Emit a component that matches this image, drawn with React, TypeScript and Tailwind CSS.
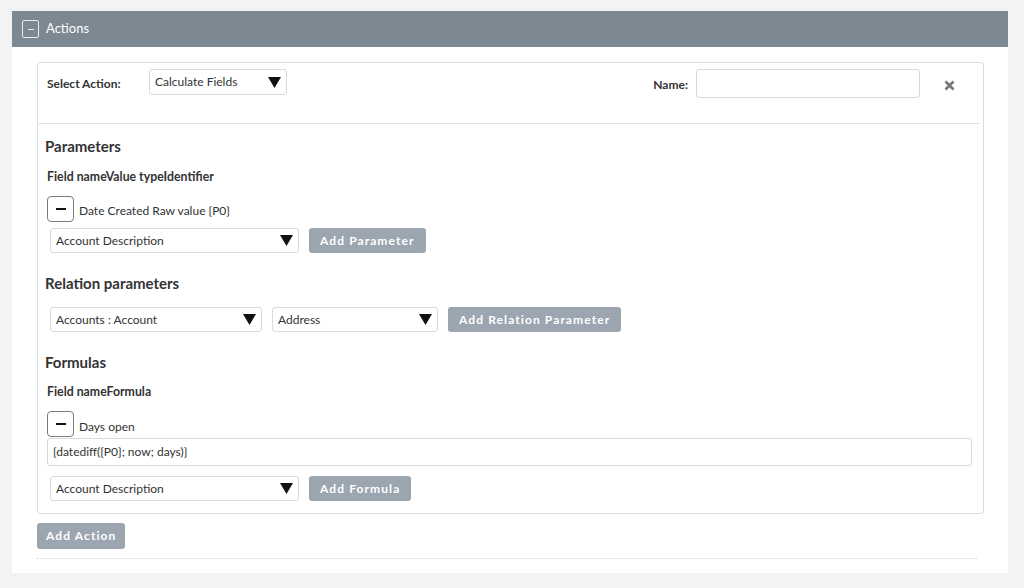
import React from "react";

const font = { fontFamily: "Lato, 'Open Sans', sans-serif" };

function Arrow() {
  return (
    <svg width="13" height="11" viewBox="0 0 13 11" className="shrink-0">
      <path d="M0 0 H13 L6.5 11 Z" fill="#111" />
    </svg>
  );
}

function Select({ value, width }: { value: string; width: string }) {
  return (
    <div
      className={`flex h-[25px] items-center justify-between rounded-[3px] border border-[#dadada] bg-white pl-[5px] pr-[5px] text-[12px] text-[#333] ${width}`}
    >
      <span>{value}</span>
      <Arrow />
    </div>
  );
}

function GrayButton({ label }: { label: string }) {
  return (
    <button className="h-[25px] rounded-[3px] bg-[#9ba6b1] px-[11px] text-[12px] font-bold tracking-[1.1px] text-white">
      {label}
    </button>
  );
}

function MinusButton() {
  return (
    <div className="flex h-[26px] w-[27px] shrink-0 items-center justify-center rounded-[4px] border border-[#7a7a7a] bg-white">
      <div className="h-[2px] w-[10px] bg-[#111]" />
    </div>
  );
}

export default function App() {
  return (
    <div className="h-[588px] w-[1024px] bg-[#f3f3f3] pl-[12px] pr-[16px] pt-[11px]" style={font}>
      <div className="h-[562px] bg-white">
        <div className="flex h-[36px] items-center bg-[#7c8892] pl-[10px]">
          <div className="flex h-[18px] w-[17px] items-center justify-center rounded-[2px] border border-[#e8ecef]">
            <div className="h-[1px] w-[6px] bg-[#e8ecef]" />
          </div>
          <span className="ml-[7px] text-[13px] text-white">Actions</span>
        </div>

        <div className="pl-[25px] pr-[24px] pt-[15px]">
          <div className="rounded-[3px] border border-[#dcdcdc] pb-[12px]">
            <div className="flex h-[60px] items-start pl-[9px] pr-[28px] pt-[6px]">
              <span className="mt-[6px] w-[102px] text-[12px] font-bold text-[#333]">Select Action:</span>
              <Select value="Calculate Fields" width="w-[138px] h-[26px]" />
              <div className="flex-1" />
              <span className="mt-[7px] text-[12px] font-bold text-[#333]">Name:</span>
              <div className="ml-[8px] h-[29px] w-[224px] rounded-[3px] border border-[#dadada]" />
              <svg width="11" height="11" viewBox="0 0 11 11" className="ml-[24px] mt-[11px]">
                <path d="M1.5 1.5 L9.5 9.5 M9.5 1.5 L1.5 9.5" stroke="#777" strokeWidth="2.6" />
              </svg>
            </div>
            <div className="mr-[3px] border-t border-[#e3e3e3]" />

            <div className="pl-[7px] pr-[11px]">
              <h2 className="mt-[12px] text-[15px] font-bold leading-[20px] text-[#333]">Parameters</h2>
              <p className="ml-[2px] mt-[13px] text-[12.3px] font-bold leading-[16px] text-[#333]">
                Field nameValue typeIdentifier
              </p>
              <div className="ml-[2px] mt-[11px] flex items-center gap-[5px]">
                <MinusButton />
                <span className="mt-[3px] text-[12px] text-[#333]">Date Created Raw value {"{P0}"}</span>
              </div>
              <div className="ml-[5px] mt-[6px] flex items-center gap-[10px]">
                <Select value="Account Description" width="w-[249px]" />
                <GrayButton label="Add Parameter" />
              </div>

              <h2 className="mt-[20px] text-[15px] font-bold leading-[20px] text-[#333]">Relation parameters</h2>
              <div className="ml-[5px] mt-[14px] flex items-center gap-[10px]">
                <Select value="Accounts : Account" width="w-[212px]" />
                <Select value="Address" width="w-[166px]" />
                <GrayButton label="Add Relation Parameter" />
              </div>

              <h2 className="mt-[20px] text-[15px] font-bold leading-[20px] text-[#333]">Formulas</h2>
              <p className="ml-[2px] mt-[12px] text-[12.3px] font-bold leading-[16px] text-[#333]">Field nameFormula</p>
              <div className="ml-[2px] mt-[11px] flex items-center gap-[5px]">
                <MinusButton />
                <span className="mt-[5px] text-[12px] text-[#333]">Days open</span>
              </div>
              <div className="ml-[2px] mt-[1px] flex h-[28px] items-center rounded-[3px] border border-[#dadada] pl-[5px] text-[12px] text-[#333]">
                {"{datediff({P0}; now; days)}"}
              </div>
              <div className="ml-[5px] mt-[10px] flex items-center gap-[10px]">
                <Select value="Account Description" width="w-[249px]" />
                <GrayButton label="Add Formula" />
              </div>
            </div>
          </div>

          <div className="mt-[8px]">
            <button className="h-[26px] rounded-[3px] bg-[#9ba6b1] px-[9px] text-[12px] font-bold tracking-[1.1px] text-white">
              Add Action
            </button>
          </div>
          <div className="mr-[7px] mt-[9px] border-t border-dotted border-[#d8d8d8]" />
        </div>
      </div>
    </div>
  );
}
